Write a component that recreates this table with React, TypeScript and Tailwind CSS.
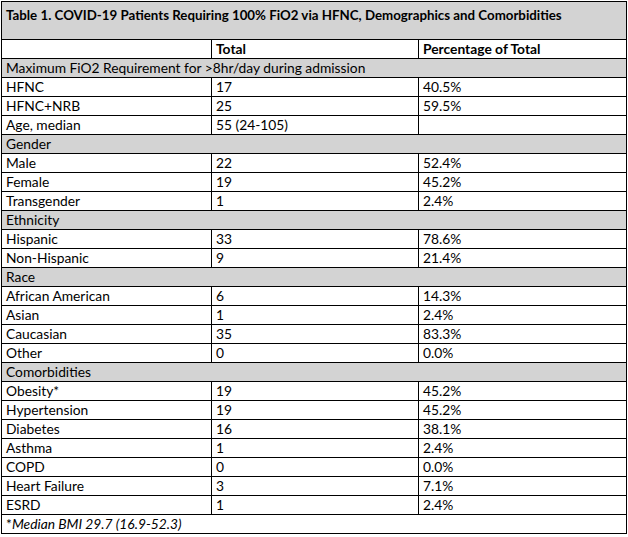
const rows: Array<[string, string, string] | string> = [
  "Maximum FiO2 Requirement for >8hr/day during admission",
  ["HFNC", "17", "40.5%"],
  ["HFNC+NRB", "25", "59.5%"],
  ["Age, median", "55 (24-105)", ""],
  "Gender",
  ["Male", "22", "52.4%"],
  ["Female", "19", "45.2%"],
  ["Transgender", "1", "2.4%"],
  "Ethnicity",
  ["Hispanic", "33", "78.6%"],
  ["Non-Hispanic", "9", "21.4%"],
  "Race",
  ["African American", "6", "14.3%"],
  ["Asian", "1", "2.4%"],
  ["Caucasian", "35", "83.3%"],
  ["Other", "0", "0.0%"],
  "Comorbidities",
  ["Obesity*", "19", "45.2%"],
  ["Hypertension", "19", "45.2%"],
  ["Diabetes", "16", "38.1%"],
  ["Asthma", "1", "2.4%"],
  ["COPD", "0", "0.0%"],
  ["Heart Failure", "3", "7.1%"],
  ["ESRD", "1", "2.4%"],
];

const cell = "border border-black px-[4px] h-[19px] py-0 leading-[18px] align-middle";

export default function App() {
  return (
    <div className="bg-white w-[628px] h-[537px] pl-[1px] pt-[1px] text-[13.8px] text-black font-['Lato','Liberation_Sans',sans-serif]">
      <table className="border-collapse table-fixed w-[625px]">
        <colgroup>
          <col className="w-[210px]" />
          <col className="w-[207px]" />
          <col className="w-[208px]" />
        </colgroup>
        <tbody>
          <tr>
            <td colSpan={3} className="border border-black bg-[#d3d3d3] h-[38px] px-[4px] pt-[4px] align-top font-bold text-[13.3px] leading-[18px]">
              Table 1. COVID-19 Patients Requiring 100% FiO2 via HFNC, Demographics and Comorbidities
            </td>
          </tr>
          <tr>
            <td className={cell}></td>
            <td className={`${cell} font-bold`}>Total</td>
            <td className={`${cell} font-bold`}>Percentage of Total</td>
          </tr>
          {rows.map((r, i) =>
            typeof r === "string" ? (
              <tr key={i}>
                <td colSpan={3} className={`${cell} bg-[#d3d3d3]`}>
                  {r}
                </td>
              </tr>
            ) : (
              <tr key={i}>
                <td className={cell}>{r[0]}</td>
                <td className={cell}>{r[1]}</td>
                <td className={cell}>{r[2]}</td>
              </tr>
            )
          )}
          <tr>
            <td colSpan={3} className={cell}>
              *<span className="italic">Median BMI 29.7 (16.9-52.3)</span>
            </td>
          </tr>
        </tbody>
      </table>
    </div>
  );
}
